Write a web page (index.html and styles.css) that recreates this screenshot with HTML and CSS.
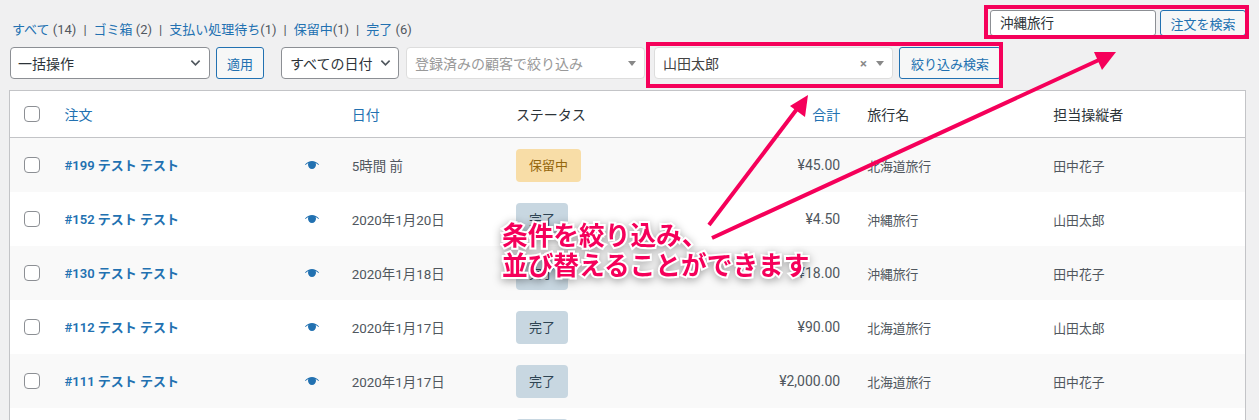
FILE: index.html
```html
<!DOCTYPE html>
<html lang="ja">
<head>
    <meta charset="UTF-8">
    <title>注文</title>
    <link rel="stylesheet" href="styles.css">
</head>
<body>
    <svg class="defs" width="0" height="0">
        <symbol id="eye-icon" viewBox="0 0 14 8">
            <path d="M0 3.6C2 1.200 4.400 0 7 0s5 1.200 7 3.600l-.6.500C12.400 3.200 11.500 2.500 10.500 2.100c.3.500.5 1 .5 1.600C11 5.900 9.200 8 7 8S3 5.900 3 3.700c0-.6.200-1.100.5-1.600C2.500 2.500 1.600 3.200.6 4.100z"/>
        </symbol>
    </svg>

    <div class="top">
        <ul class="subsub">
            <li><a href="#">すべて</a> (14)</li>
            <li><a href="#">ゴミ箱</a> (2)</li>
            <li><a href="#">支払い処理待ち</a>(1)</li>
            <li><a href="#">保留中</a>(1)</li>
            <li class="last"><a href="#">完了</a> (6)</li>
        </ul>
        <div class="search">
            <div class="search-input">沖縄旅行</div>
            <button class="btn search-btn">注文を検索</button>
        </div>
    </div>

    <div class="filters">
        <div class="select bulk">一括操作<svg class="chev" viewBox="0 0 12 8"><path d="M1.500 1.500 6 6l4.500-4.500"/></svg></div>
        <button class="btn apply">適用</button>
        <div class="select dates">すべての日付<svg class="chev" viewBox="0 0 12 8"><path d="M1.500 1.500 6 6l4.500-4.500"/></svg></div>
        <div class="select2 customer"><span class="placeholder">登録済みの顧客で絞り込み</span><i class="caret"></i></div>
        <div class="select2 chosen"><span>山田太郎</span><b class="clear">×</b><i class="caret"></i></div>
        <button class="btn filter-btn">絞り込み検索</button>
    </div>

    <table class="orders">
        <colgroup>
            <col class="c-check"><col class="c-order"><col class="c-date"><col class="c-status"><col class="c-total"><col class="c-trip"><col class="c-staff">
        </colgroup>
        <thead>
            <tr>
                <th><span class="check"></span></th>
                <th><a href="#">注文</a></th>
                <th><a href="#">日付</a></th>
                <th>ステータス</th>
                <th class="num"><a href="#">合計</a></th>
                <th>旅行名</th>
                <th>担当操縦者</th>
            </tr>
        </thead>
        <tbody>
            <tr>
                <td><span class="check"></span></td>
                <td><div class="order"><a href="#">#199 テスト テスト</a><svg class="eye"><use href="#eye-icon"/></svg></div></td>
                <td>5時間 前</td>
                <td><span class="badge on-hold">保留中</span></td>
                <td class="num">¥45.00</td>
                <td>北海道旅行</td>
                <td>田中花子</td>
            </tr>
            <tr>
                <td><span class="check"></span></td>
                <td><div class="order"><a href="#">#152 テスト テスト</a><svg class="eye"><use href="#eye-icon"/></svg></div></td>
                <td>2020年1月20日</td>
                <td><span class="badge done">完了</span></td>
                <td class="num">¥4.50</td>
                <td>沖縄旅行</td>
                <td>山田太郎</td>
            </tr>
            <tr>
                <td><span class="check"></span></td>
                <td><div class="order"><a href="#">#130 テスト テスト</a><svg class="eye"><use href="#eye-icon"/></svg></div></td>
                <td>2020年1月18日</td>
                <td><span class="badge done">完了</span></td>
                <td class="num">¥18.00</td>
                <td>沖縄旅行</td>
                <td>田中花子</td>
            </tr>
            <tr>
                <td><span class="check"></span></td>
                <td><div class="order"><a href="#">#112 テスト テスト</a><svg class="eye"><use href="#eye-icon"/></svg></div></td>
                <td>2020年1月17日</td>
                <td><span class="badge done">完了</span></td>
                <td class="num">¥90.00</td>
                <td>北海道旅行</td>
                <td>山田太郎</td>
            </tr>
            <tr>
                <td><span class="check"></span></td>
                <td><div class="order"><a href="#">#111 テスト テスト</a><svg class="eye"><use href="#eye-icon"/></svg></div></td>
                <td>2020年1月17日</td>
                <td><span class="badge done">完了</span></td>
                <td class="num">¥2,000.00</td>
                <td>北海道旅行</td>
                <td>田中花子</td>
            </tr>
            <tr>
                <td></td>
                <td></td>
                <td></td>
                <td><span class="badge done blank"></span></td>
                <td></td>
                <td></td>
                <td></td>
            </tr>
        </tbody>
    </table>

    <!-- annotations on top of the screenshot -->
    <div class="mark mark-search"></div>
    <div class="mark mark-filter"></div>
    <svg class="arrows" viewBox="0 0 1259 420">
        <path d="M709 225 800 105M712 238 1101 59"/>
        <polygon points="808,95 805,117 790,106"/>
        <polygon points="1116,52 1102,70 1094,52"/>
    </svg>
    <p class="callout">条件を絞り込み、<br>並び替えることができます</p>
</body>
</html>
```

FILE: styles.css
```css
html, body { height: 420px; overflow: hidden; }
body { margin: 0; background: #f0f0f1; color: #3c434a; font-family: Roboto, "Noto Sans CJK JP", sans-serif; font-size: 13px; position: relative; }
a { color: #2271b1; text-decoration: none; }
.defs { position: absolute; }

.top { display: flex; justify-content: space-between; padding: 10px 13px 0 12px; height: 27px; }
.subsub { list-style: none; margin: 11px 0 0; padding: 0; display: flex; font-size: 13px; line-height: 17px; color: #50575e; }
.subsub li::after { content: "|"; margin: 0 7px; color: #50575e; }
.subsub li.last::after { content: ""; }

.search { display: flex; gap: 4px; height: 26px; }
.search-input { box-sizing: border-box; width: 166px; height: 26px; line-height: 24px; padding-left: 9px; background: #fff; border: 1px solid #8c8f94; border-radius: 3px; color: #2c3338; font-size: 13.500px; }
.btn { box-sizing: border-box; font: inherit; color: #2271b1; background: #f6f7f7; border: 1px solid #2271b1; border-radius: 3px; padding: 0; }
.search-btn { width: 86px; height: 26px; }

.filters { display: flex; align-items: center; margin: 10px 0 0 10px; height: 32px; }
.select { box-sizing: border-box; display: flex; align-items: center; justify-content: space-between; height: 32px; background: #fff; border: 1px solid #8c8f94; border-radius: 4px; color: #2c3338; font-size: 14px; }
.bulk { width: 200px; padding: 0 8px 0 7px; }
.apply { width: 48px; height: 32px; margin-left: 6px; }
.dates { width: 118px; padding: 0 7px 0 8px; margin-left: 17px; }
.chev { width: 11px; height: 8px; fill: none; stroke: #50575e; stroke-width: 1.800; }
.select2 { box-sizing: border-box; display: flex; align-items: center; height: 32px; padding-left: 8px; background: #fff; border: 1px solid #ddd; border-radius: 4px; font-size: 14px; }
.customer { width: 239px; margin-left: 7px; }
.chosen { width: 239px; margin-left: 9px; color: #444; }
.placeholder { color: #999; flex: 1; }
.chosen span { flex: 1; }
.clear { color: #888; font-size: 13px; margin-right: 9px; }
.caret { width: 0; height: 0; border: 4px solid transparent; border-top: 5px solid #888; border-bottom: 0; margin-right: 8px; }
.filter-btn { width: 102px; height: 32px; margin-left: 6px; }

.orders { width: 1237px; margin: 11px 0 0 9px; border-collapse: collapse; table-layout: fixed; background: #fff; border: 1px solid #c3c4c7; }
.c-check { width: 44px; }
.c-order { width: 287px; }
.c-date { width: 164px; }
.c-status { width: 245px; }
.c-total { width: 106px; }
.c-trip { width: 186px; }
.c-staff { width: 203px; }
th { height: 46px; padding: 0 11px; text-align: left; font-weight: 400; font-size: 14px; color: #2c3338; border-bottom: 1px solid #c3c4c7; }
td { height: 54px; padding: 0 11px; color: #50575e; font-size: 12.800px; }
td:nth-child(3) { font-size: 13.400px; }
tbody tr:nth-child(odd) { background: #f9f9f9; }
th:first-child, td:first-child { padding: 0 0 0 14px; }
.num { text-align: right; padding-right: 16px; }
td.num { font-size: 14px; }
.check { display: block; width: 14px; height: 14px; background: #fff; border: 1px solid #8c8f94; border-radius: 4px; }

.order { display: flex; justify-content: space-between; align-items: center; padding-right: 11px; }
.order a { font-weight: 600; font-size: 13px; margin-bottom: 2px; }
.eye { width: 14px; height: 8px; fill: #2271b1; }
.badge { display: inline-block; height: 33px; line-height: 33px; padding: 0 13px; border-radius: 4px; font-size: 13px; vertical-align: middle; }
.on-hold { background: #f8dda7; color: #94660c; }
.done { background: #c8d7e1; color: #2e4453; }
.blank { width: 26px; }

.mark { position: absolute; border: 4px solid #f5005a; box-sizing: border-box; }
.mark-search { left: 984px; top: 5px; width: 265px; height: 34px; }
.mark-filter { left: 646px; top: 42px; width: 357px; height: 46px; }
.arrows { position: absolute; left: 0; top: 0; width: 1259px; height: 420px; fill: #f5005a; }
.arrows path { fill: none; stroke: #f5005a; stroke-width: 4px; }
.callout { position: absolute; left: 502px; top: 221px; margin: 0; font-size: 25.700px; line-height: 30px; font-weight: 700; color: #f5005a; -webkit-text-stroke: 4px #fff; paint-order: stroke fill; filter: drop-shadow(0 2px 4px rgba(0, 0, 0, .35)); white-space: nowrap; }
```
